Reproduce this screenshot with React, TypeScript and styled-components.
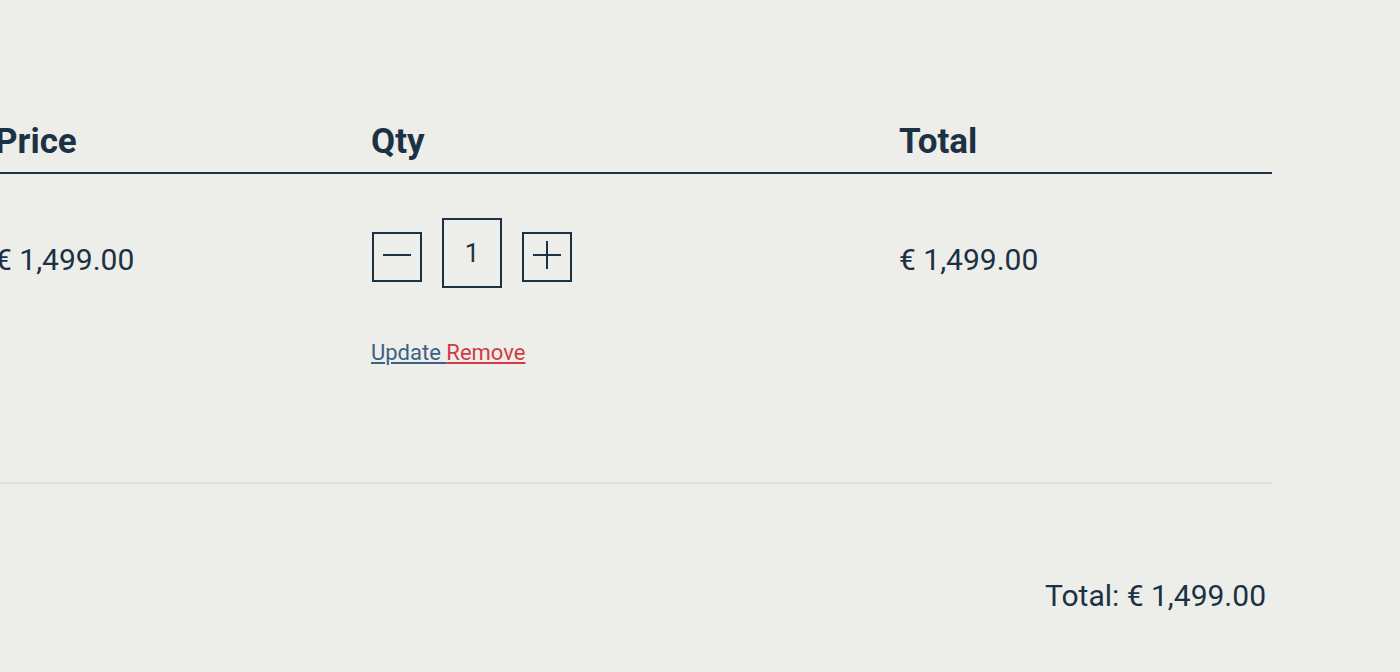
import React from "react";
import styled, { createGlobalStyle } from "styled-components";

const GlobalStyle = createGlobalStyle`
  html, body {
    margin: 0;
    padding: 0;
    background: #edede9;
  }
  body {
    font-family: Roboto, "Liberation Sans", sans-serif;
    color: #1c3144;
    overflow: hidden;
  }
`;

const Page = styled.main`
  width: 1400px;
  height: 672px;
  background: #edede9;
  overflow: hidden;
  padding-top: 122px;
  box-sizing: border-box;
`;

const Cart = styled.section`
  width: 1277px;
  margin-left: -5px;
`;

const Grid = styled.div`
  display: grid;
  grid-template-columns: 376px 528px 1fr;
`;

const HeadRow = styled(Grid)`
  border-bottom: 2px solid #1c3144;
`;

const HeadCell = styled.div`
  font-size: 35px;
  font-weight: 700;
  line-height: 40px;
  padding-bottom: 10px;
`;

const BodyRow = styled(Grid)`
  border-bottom: 2px solid #dcdfe3;
  height: 310px;
  box-sizing: border-box;
`;

const PriceCell = styled.div`
  font-size: 30px;
  line-height: 36px;
  padding-top: 68px;
`;

const QtyCell = styled.div`
  padding-top: 44px;
`;

const Stepper = styled.div`
  display: flex;
  align-items: flex-start;
  gap: 20px;
  padding-left: 1px;
`;

const StepButton = styled.button`
  width: 50px;
  height: 50px;
  margin-top: 14px;
  box-sizing: border-box;
  border: 2px solid #1c3144;
  background: transparent;
  padding: 0 0 4px;
  display: flex;
  align-items: center;
  justify-content: center;
  color: #1c3144;
  cursor: pointer;
`;

const QtyInput = styled.input`
  width: 60px;
  height: 70px;
  box-sizing: border-box;
  border: 2px solid #1c3144;
  background: transparent;
  text-align: center;
  font-family: Roboto, "Liberation Sans", sans-serif;
  font-size: 26px;
  color: #1c3144;
  padding: 0;
  outline: none;
`;

const Actions = styled.div`
  margin-top: 52px;
  font-size: 22px;
  line-height: 26px;
`;

const ActionLink = styled.a<{ $tone: "update" | "remove" }>`
  color: ${(p) => (p.$tone === "remove" ? "#d13c44" : "#3b6186")};
  text-decoration: underline;
  text-underline-offset: 2px;
  cursor: pointer;
`;

const Summary = styled.div`
  display: flex;
  justify-content: flex-end;
  padding: 94px 6px 0 0;
  font-size: 30px;
  line-height: 36px;
`;

const MinusIcon = () => (
  <svg width="28" height="28" viewBox="0 0 28 28" aria-hidden="true">
    <line x1="0" y1="14" x2="28" y2="14" stroke="currentColor" strokeWidth="2" />
  </svg>
);

const PlusIcon = () => (
  <svg width="28" height="28" viewBox="0 0 28 28" aria-hidden="true">
    <line x1="0" y1="14" x2="28" y2="14" stroke="currentColor" strokeWidth="2" />
    <line x1="14" y1="0" x2="14" y2="28" stroke="currentColor" strokeWidth="2" />
  </svg>
);

export default function App() {
  return (
    <>
      <GlobalStyle />
      <Page>
        <Cart>
          <HeadRow>
            <HeadCell>Price</HeadCell>
            <HeadCell>Qty</HeadCell>
            <HeadCell>Total</HeadCell>
          </HeadRow>
          <BodyRow>
            <PriceCell>€ 1,499.00</PriceCell>
            <QtyCell>
              <Stepper>
                <StepButton aria-label="Decrease quantity">
                  <MinusIcon />
                </StepButton>
                <QtyInput defaultValue="1" />
                <StepButton aria-label="Increase quantity">
                  <PlusIcon />
                </StepButton>
              </Stepper>
              <Actions>
                <ActionLink $tone="update">Update </ActionLink>
                <ActionLink $tone="remove">Remove</ActionLink>
              </Actions>
            </QtyCell>
            <PriceCell>€ 1,499.00</PriceCell>
          </BodyRow>
          <Summary>Total: € 1,499.00</Summary>
        </Cart>
      </Page>
    </>
  );
}
